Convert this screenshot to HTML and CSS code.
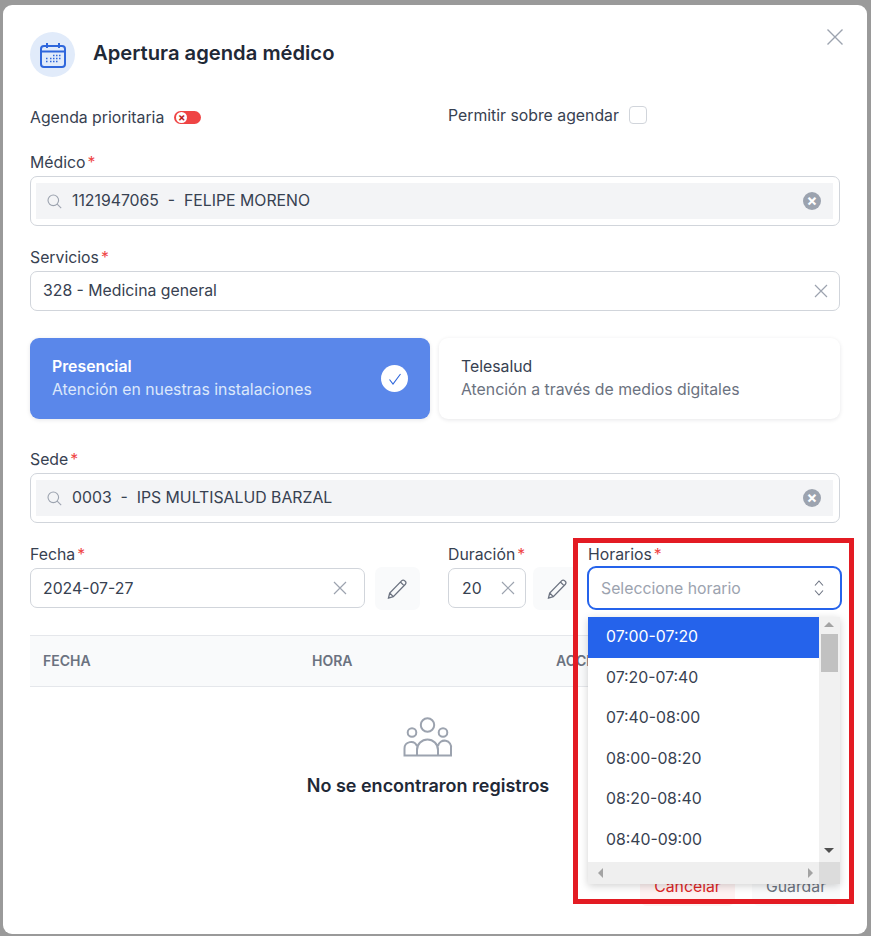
FILE: index.html

```html
<!DOCTYPE html>
<html lang="es">
<head>
    <meta charset="UTF-8">
    <title>Apertura agenda médico</title>
    <link rel="stylesheet" href="styles.css">
</head>
<body>
<div class="modal">
    <svg class="close" width="16" height="16" viewBox="0 0 16 16"><path d="M.5.5l15 15M15.500.5l-15 15"/></svg>

    <div class="head">
        <div class="head-icon">
            <svg width="28" height="28" viewBox="0 0 28 28">
                <rect x="2" y="5" width="24" height="21" rx="3" class="cal-line"/>
                <path d="M2 10.5h24M8 2v5M20 2v5" class="cal-line"/>
                <path d="M14 14.5h1.5M17 14.5h1.5M20 14.5h1.5M11 17.5h1.5M14 17.5h1.5M17 17.5h1.5M20 17.5h1.5M7 17.5h1.5M7 20.5h1.5M11 20.5h1.5M14 20.5h1.5M17 20.5h1.5" class="cal-dots"/>
            </svg>
        </div>
        <h1>Apertura agenda médico</h1>
    </div>

    <div class="options">
        <div class="opt-left">
            <span class="opt-text">Agenda prioritaria</span>
            <span class="toggle"><span class="knob">×</span></span>
        </div>
        <div class="opt-right">
            <span class="opt-text">Permitir sobre agendar</span>
            <span class="checkbox"></span>
        </div>
    </div>

    <div class="group">
        <label>Médico<em>*</em></label>
        <div class="field field-search">
            <div class="search-inner">
                <svg class="search-icon" width="15" height="15" viewBox="0 0 15 15"><circle cx="6.3" cy="6.3" r="5.3"/><path d="M10.2 10.2l4 4"/></svg>
                <span class="value">1121947065  -  FELIPE MORENO</span>
                <span class="clear-dot">×</span>
            </div>
        </div>
    </div>

    <div class="group">
        <label>Servicios<em>*</em></label>
        <div class="field">
            <span class="value">328 - Medicina general</span>
            <svg class="x" width="14" height="14" viewBox="0 0 14 14"><path d="M1 1l12 12M13 1L1 13"/></svg>
        </div>
    </div>

    <div class="cards">
        <div class="card card-active">
            <div class="card-text">
                <div class="card-title">Presencial</div>
                <div class="card-desc">Atención en nuestras instalaciones</div>
            </div>
            <span class="check">
                <svg width="14" height="14" viewBox="0 0 14 14"><path d="M1.5 7.5l3.5 4.5 7.5-10"/></svg>
            </span>
        </div>
        <div class="card">
            <div class="card-text">
                <div class="card-title">Telesalud</div>
                <div class="card-desc">Atención a través de medios digitales</div>
            </div>
        </div>
    </div>

    <div class="group group-sede">
        <label>Sede<em>*</em></label>
        <div class="field field-search">
            <div class="search-inner">
                <svg class="search-icon" width="15" height="15" viewBox="0 0 15 15"><circle cx="6.3" cy="6.3" r="5.3"/><path d="M10.2 10.2l4 4"/></svg>
                <span class="value">0003  -  IPS MULTISALUD BARZAL</span>
                <span class="clear-dot">×</span>
            </div>
        </div>
    </div>

    <div class="row">
        <div class="col-fecha">
            <label>Fecha<em>*</em></label>
            <div class="with-btn">
                <div class="field">
                    <span class="value">2024-07-27</span>
                    <svg class="x" width="14" height="14" viewBox="0 0 14 14"><path d="M1 1l12 12M13 1L1 13"/></svg>
                </div>
                <span class="pencil-btn">
                    <svg width="22" height="22" viewBox="0 0 22 22"><path d="M2.5 20l1.2-5L15.8 2.6a1.9 1.9 0 0 1 2.7 0l.9.9a1.9 1.9 0 0 1 0 2.7L7.3 18.6zM3.7 15l3.6 3.6M14.4 4l3.6 3.6"/></svg>
                </span>
            </div>
        </div>
        <div class="col-duracion">
            <label>Duración<em>*</em></label>
            <div class="with-btn with-btn-small">
                <div class="field">
                    <span class="value">20</span>
                    <svg class="x" width="14" height="14" viewBox="0 0 14 14"><path d="M1 1l12 12M13 1L1 13"/></svg>
                </div>
                <span class="pencil-btn">
                    <svg width="22" height="22" viewBox="0 0 22 22"><path d="M2.5 20l1.2-5L15.8 2.6a1.9 1.9 0 0 1 2.7 0l.9.9a1.9 1.9 0 0 1 0 2.7L7.3 18.6zM3.7 15l3.6 3.6M14.4 4l3.6 3.6"/></svg>
                </span>
            </div>
        </div>
        <div class="col-horarios">
            <label>Horarios<em>*</em></label>
            <div class="select">
                <span class="placeholder">Seleccione horario</span>
                <svg width="10" height="16" viewBox="0 0 10 16"><path d="M1 5.500L5 1l4 4.500M1 10.500L5 15l4-4.500"/></svg>
                <div class="dropdown">
                    <ul class="options-list">
                        <li class="selected">07:00-07:20</li>
                        <li>07:20-07:40</li>
                        <li>07:40-08:00</li>
                        <li>08:00-08:20</li>
                        <li>08:20-08:40</li>
                        <li>08:40-09:00</li>
                    </ul>
                    <div class="vbar">
                        <span class="arrow-up"></span>
                        <span class="thumb"></span>
                        <span class="arrow-down"></span>
                    </div>
                    <div class="hbar">
                        <span class="arrow-left"></span>
                        <span class="arrow-right"></span>
                    </div>
                    <div class="corner"></div>
                </div>
            </div>
        </div>
    </div>

    <div class="table-head">
        <span>Fecha</span>
        <span>Hora</span>
        <span>Acciones</span>
    </div>

    <div class="empty">
        <svg width="50" height="40" viewBox="0 0 50 40">
            <circle cx="24.5" cy="8" r="6.7"/>
            <circle cx="9" cy="15.5" r="4.3"/>
            <circle cx="40" cy="15.5" r="4.3"/>
            <path d="M14 38.5V33a10.5 10.5 0 0 1 21 0v5.500zM14 29a6.500 6.500 0 0 0-12.500 2.500v7H14M35 29a6.500 6.500 0 0 1 13 2.500v7H35"/>
        </svg>
        <p>No se encontraron registros</p>
    </div>

    <div class="actions">
        <button class="btn-cancel">Cancelar</button>
        <button class="btn-save">Guardar</button>
    </div>

    <div class="frame"></div>
</div>
</body>
</html>
```

FILE: styles.css

```css
* {
    box-sizing: border-box;
    padding: 0;
    margin: 0;
}
html, body {
    height: 936px;
    overflow: hidden;
}
body {
    background-color: #9a9a9a;
    padding: 5px 4px 2px 3px;
    font-family: Inter, "Noto Sans", sans-serif;
    font-size: 15.8px;
    color: #374151;
}
ul {
    list-style: none;
}
.modal {
    position: relative;
    height: 929px;
    background-color: #fff;
    border-radius: 9px;
    padding: 27px 27px 0;
}
.close {
    position: absolute;
    top: 24px;
    right: 24px;
}
.close path {
    fill: none;
    stroke: #9ca3af;
    stroke-width: 1.4;
}

/* titulo */
.head {
    display: flex;
    align-items: center;
    gap: 18px;
    height: 45px;
}
.head-icon {
    width: 45px;
    height: 45px;
    border-radius: 50%;
    background-color: #e1ebfa;
    display: flex;
    align-items: center;
    justify-content: center;
}
.cal-line {
    fill: none;
    stroke: #2f67dc;
    stroke-width: 2;
}
.cal-dots {
    fill: none;
    stroke: #2f67dc;
    stroke-width: 1.7;
}
h1 {
    margin-top: -4px;
    font-size: 20.2px;
    font-weight: 600;
    color: #1f2937;
}

.options {
    display: grid;
    grid-template-columns: 418px 1fr;
    margin-top: 28px;
    height: 47px;
    line-height: 20px;
}
.opt-left, .opt-right {
    display: flex;
    align-items: center;
    height: 20px;
}
.opt-text {
    padding-top: 2px;
}
.opt-left {
    gap: 10px;
    margin-top: 2px;
}
.opt-right {
    gap: 10px;
}
.toggle {
    width: 27px;
    height: 13px;
    border-radius: 7px;
    background-color: #ef4444;
    padding: 1px 2px;
}
.knob {
    display: block;
    width: 11px;
    height: 11px;
    border-radius: 50%;
    background-color: #fff;
    color: #b91c1c;
    font-size: 11px;
    font-weight: 700;
    line-height: 10px;
    text-align: center;
}
.checkbox {
    width: 18px;
    height: 18px;
    border: 1px solid #d1d5db;
    border-radius: 4px;
}

/* campos */
label {
    display: block;
    height: 20px;
    line-height: 22px;
    margin-bottom: 4px;
    color: #374151;
}
label em {
    color: #ef4444;
    font-style: normal;
    margin-left: 2px;
}
.group {
    margin-bottom: 21px;
}
.field {
    display: flex;
    align-items: center;
    justify-content: space-between;
    height: 40px;
    border: 1px solid #d1d5db;
    border-radius: 7px;
    padding: 0 11px 0 12px;
}
.value {
    white-space: pre;
}
.group .value {
    padding-bottom: 2px;
}
.x path {
    fill: none;
    stroke: #9ca3af;
    stroke-width: 1.2;
}
.field-search {
    height: 50px;
    padding: 6px 6px 6px 5px;
}
.search-inner {
    display: flex;
    align-items: center;
    width: 100%;
    height: 36px;
    background-color: #f3f4f6;
    padding: 0 12px 0 11px;
}
.search-icon {
    margin-right: 10px;
}
.search-icon circle, .search-icon path {
    fill: none;
    stroke: #9ca3af;
    stroke-width: 1.1;
}
.clear-dot {
    margin-left: auto;
    width: 18px;
    height: 18px;
    border-radius: 50%;
    background-color: #9ca3af;
    color: #fff;
    font-size: 16px;
    font-weight: 700;
    line-height: 17px;
    text-align: center;
}

/* tarjetas */
.cards {
    display: grid;
    grid-template-columns: 400px 401px;
    gap: 9px;
    margin-top: 27px;
}
.card {
    display: flex;
    align-items: center;
    justify-content: space-between;
    height: 81px;
    border-radius: 9px;
    padding: 0 22px;
    box-shadow: 0 1px 4px rgba(17, 24, 39, .1);
    line-height: 23px;
}
.card-text {
    padding-bottom: 2px;
}
.card-title {
    font-weight: 400;
}
.card-desc {
    color: #6b7280;
}
.card-active {
    background-color: #5a87ea;
}
.card-active .card-title {
    color: #fff;
    font-weight: 600;
}
.card-active .card-desc {
    color: #dce7fb;
}
.check {
    display: flex;
    align-items: center;
    justify-content: center;
    width: 27px;
    height: 27px;
    border-radius: 50%;
    background-color: #fff;
}
.check path {
    fill: none;
    stroke: #2f67dc;
    stroke-width: 1.1;
}
.group-sede {
    margin-top: 30px;
}

/* fecha, duracion, horarios */
.row {
    display: flex;
    margin-right: -2px;
}
.col-fecha {
    width: 390px;
    margin-right: 28px;
}
.col-duracion {
    width: 130px;
    margin-right: 9px;
}
.col-horarios {
    width: 255px;
}
.col-horarios label {
    margin-left: 1px;
}
.with-btn {
    display: grid;
    grid-template-columns: 335px 45px;
    gap: 10px;
}
.with-btn .field {
    padding-right: 17px;
}
.with-btn-small {
    grid-template-columns: 78px 45px;
    gap: 7px;
}
.with-btn-small .field {
    padding: 0 10px 0 13px;
}
.pencil-btn {
    display: flex;
    align-items: center;
    justify-content: center;
    height: 43px;
    margin-top: -1px;
    border-radius: 7px;
    background-color: #f9fafb;
}
.pencil-btn svg {
    margin-right: 2px;
}
.with-btn-small .pencil-btn svg {
    margin: 0 0 0 3px;
}
.pencil-btn path {
    fill: none;
    stroke: #6b7280;
    stroke-width: 1.3;
}
.select {
    position: relative;
    display: flex;
    align-items: center;
    justify-content: space-between;
    height: 44px;
    margin-top: -2px;
    border: 2px solid #2563eb;
    border-radius: 9px;
    padding: 0 16px 0 12px;
}
.placeholder {
    color: #9ca3af;
}
.select > svg path {
    fill: none;
    stroke: #6b7280;
    stroke-width: 1.1;
}

/* lista desplegable */
.dropdown {
    position: absolute;
    top: 49px;
    left: -1px;
    width: 252px;
    height: 267px;
    background-color: #fff;
    box-shadow: 0 2px 8px rgba(0, 0, 0, .18);
    overflow: hidden;
    z-index: 2;
}
.options-list li {
    height: 40.5px;
    line-height: 39px;
    padding-left: 18px;
    color: #374151;
}
.options-list .selected {
    background-color: #2563eb;
    color: #fff;
    width: 231px;
}
.vbar {
    position: absolute;
    top: 0;
    right: 0;
    width: 21px;
    height: 245px;
    background-color: #f1f1f1;
}
.thumb {
    position: absolute;
    top: 17px;
    left: 2px;
    width: 17px;
    height: 38px;
    background-color: #c1c1c1;
}
.arrow-up, .arrow-down, .arrow-left, .arrow-right {
    position: absolute;
    width: 0;
    height: 0;
    border: 5px solid transparent;
}
.arrow-up {
    top: 0;
    left: 5px;
    border-bottom-color: #a3a3a3;
}
.arrow-down {
    top: 231px;
    left: 5px;
    border-top-color: #505050;
}
.hbar {
    position: absolute;
    left: 0;
    bottom: 0;
    width: 231px;
    height: 22px;
    background-color: #efefef;
}
.arrow-left {
    top: 6px;
    left: 5px;
    border-right-color: #a3a3a3;
}
.arrow-right {
    top: 6px;
    right: 1px;
    border-left-color: #a3a3a3;
}
.corner {
    position: absolute;
    right: 0;
    bottom: 0;
    width: 21px;
    height: 22px;
    background-color: #dcdcdc;
}

/* tabla */
.table-head {
    display: grid;
    grid-template-columns: 269px 244px 1fr;
    align-items: center;
    height: 52px;
    margin-top: 25px;
    padding: 0 0 2px 13px;
    background-color: #f9fafb;
    border-top: 1px solid #e5e7eb;
    border-bottom: 1px solid #e5e7eb;
    font-size: 14px;
    font-weight: 600;
    color: #6b7280;
    text-transform: uppercase;
}
.empty {
    display: flex;
    flex-direction: column;
    align-items: center;
    margin-top: 30px;
    margin-right: 14px;
}
.empty svg circle, .empty svg path {
    fill: none;
    stroke: #9ca3af;
    stroke-width: 2;
}
.empty p {
    margin-top: 18px;
    font-size: 18px;
    font-weight: 600;
    color: #1f2937;
}
.actions {
    display: flex;
    justify-content: flex-end;
    gap: 17px;
    margin-top: 70px;
}
.actions button {
    height: 40px;
    border: 0;
    border-radius: 7px;
    font-family: inherit;
    font-size: 15.8px;
}
.btn-cancel {
    width: 95px;
    background-color: #fef2f2;
    color: #dc2626;
}
.btn-save {
    width: 88px;
    background-color: #f9fafb;
    color: #6b7280;
}

/* recuadro rojo encima de la captura */
.frame {
    position: absolute;
    top: 533px;
    left: 570px;
    width: 281px;
    height: 366px;
    border: 5px solid #e31b23;
    z-index: 3;
}
```
